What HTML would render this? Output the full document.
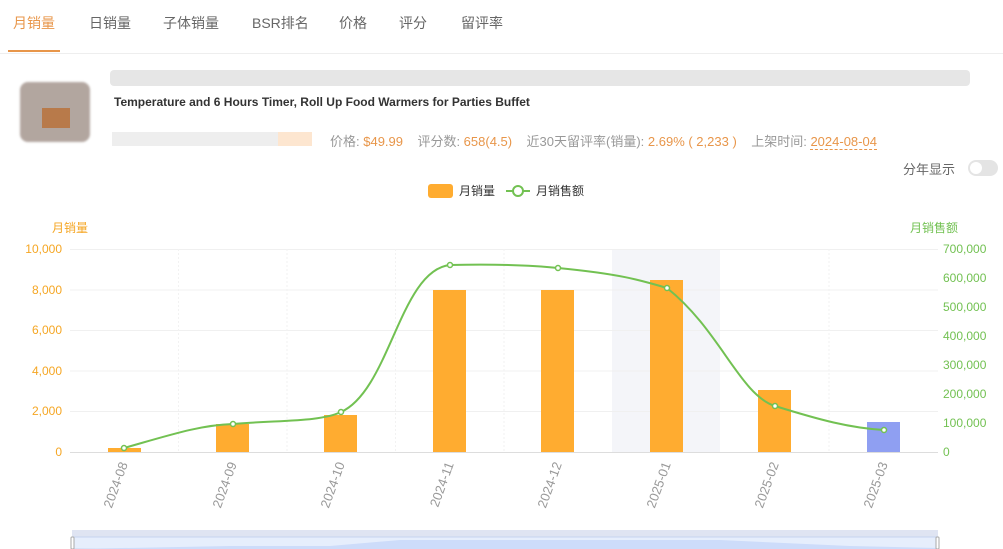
<!DOCTYPE html>
<html><head><meta charset="utf-8"><style>
body{margin:0;width:1003px;height:549px;background:#fff;font-family:"Liberation Sans","Noto Sans CJK SC",sans-serif;position:relative;overflow:hidden}
.tabs{position:absolute;top:0;left:0;right:0;height:53px;border-bottom:1px solid #eee}
.tab{position:absolute;top:13px;font-size:14px;color:#666}
.ul{position:absolute;left:8px;top:50px;width:52px;height:2px;background:#e8964a}
.a{position:absolute}
</style></head><body>
<div class="tabs">
<span class="tab" style="left:13px;color:#e8964a">月销量</span>
<span class="tab" style="left:89px">日销量</span>
<span class="tab" style="left:163px">子体销量</span>
<span class="tab" style="left:252px">BSR排名</span>
<span class="tab" style="left:339px">价格</span>
<span class="tab" style="left:399px">评分</span>
<span class="tab" style="left:461px">留评率</span>
<div class="ul"></div>
</div>
<div class="a" style="left:20px;top:82px;width:70px;height:60px;background:#a09088;filter:blur(1px);border-radius:8px;opacity:.8"></div>
<div class="a" style="left:42px;top:108px;width:28px;height:20px;background:#b87a4a"></div>
<div class="a" style="left:110px;top:70px;width:860px;height:16px;background:#e6e6e6;border-radius:4px"></div>
<div class="a" style="left:114px;top:95px;font-size:12px;font-weight:bold;color:#333">Temperature and 6 Hours Timer, Roll Up Food Warmers for Parties Buffet</div>
<div class="a" style="left:112px;top:132px;width:200px;height:14px;background:#eee"></div>
<div class="a" style="left:278px;top:132px;width:34px;height:14px;background:#fde6d0"></div>
<div class="a" style="left:330px;top:131px;font-size:13px;color:#999;white-space:nowrap">价格: <span style="color:#e8964a">$49.99</span>&nbsp;&nbsp;&nbsp;&nbsp;评分数: <span style="color:#e8964a">658(4.5)</span>&nbsp;&nbsp;&nbsp;&nbsp;近30天留评率(销量): <span style="color:#e8964a">2.69% ( 2,233 )</span>&nbsp;&nbsp;&nbsp;&nbsp;上架时间: <span style="color:#e8964a;border-bottom:1px dashed #e8964a">2024-08-04</span></div>
<div class="a" style="left:903px;top:159px;font-size:13px;color:#666">分年显示</div>
<div class="a" style="left:968px;top:160px;width:30px;height:16px;border-radius:8px;background:#e4e4e4"><div style="margin:2px;width:12px;height:12px;border-radius:6px;background:#fff"></div></div>
<svg class="a" style="left:0;top:0" width="1003" height="549" font-family="Liberation Sans,Noto Sans CJK SC,sans-serif">
<rect x="428" y="184" width="25" height="14" rx="3" fill="#ffac30"/>
<text x="459" y="195" font-size="12" fill="#333">月销量</text>
<line x1="506" y1="191" x2="530" y2="191" stroke="#72c152" stroke-width="2"/><circle cx="518" cy="191" r="5" fill="#fff" stroke="#72c152" stroke-width="2"/>
<text x="536" y="195" font-size="12" fill="#333">月销售额</text>
<text x="52" y="232" font-size="12" fill="#f5a623">月销量</text>
<text x="910" y="232" font-size="12" fill="#72c152">月销售额</text>
<rect x="612" y="249" width="108" height="203" fill="#f4f5f9"/>
<g stroke="#f0f0f0" stroke-width="1">
<line x1="70" y1="249.5" x2="938" y2="249.5"/><line x1="70" y1="290" x2="938" y2="290"/><line x1="70" y1="330.5" x2="938" y2="330.5"/><line x1="70" y1="371" x2="938" y2="371"/><line x1="70" y1="411.5" x2="938" y2="411.5"/>
</g>
<g stroke="#f2f2f2" stroke-dasharray="2,2"><line x1="178.5" y1="249" x2="178.5" y2="452"/><line x1="287" y1="249" x2="287" y2="452"/><line x1="395.5" y1="249" x2="395.5" y2="452"/><line x1="504" y1="249" x2="504" y2="452"/><line x1="829" y1="249" x2="829" y2="452"/></g>
<line x1="70" y1="452.5" x2="938" y2="452.5" stroke="#ddd"/>
<g font-size="12" fill="#f5a623" text-anchor="end"><text x="62" y="253">10,000</text><text x="62" y="294">8,000</text><text x="62" y="334">6,000</text><text x="62" y="375">4,000</text><text x="62" y="415">2,000</text><text x="62" y="456">0</text></g>
<g font-size="12" fill="#72c152"><text x="943" y="253">700,000</text><text x="943" y="282">600,000</text><text x="943" y="311">500,000</text><text x="943" y="340">400,000</text><text x="943" y="369">300,000</text><text x="943" y="398">200,000</text><text x="943" y="427">100,000</text><text x="943" y="456">0</text></g>
<g fill="#ffac30"><rect x="108" y="448" width="33" height="4"/><rect x="216" y="424" width="33" height="28"/><rect x="324" y="415" width="33" height="37"/><rect x="433" y="290" width="33" height="162"/><rect x="541" y="290" width="33" height="162"/><rect x="650" y="280" width="33" height="172"/><rect x="758" y="390" width="33" height="62"/></g>
<rect x="867" y="422" width="33" height="30" fill="#8f9ff2"/>
<path d="M124,448 C170,435 200,425 233,424 C280,420 320,422 341,412 C390,390 400,270 450,265 C500,264 530,265 558,268 C620,274 640,280 667,288 C720,330 740,395 775,406 C820,420 850,428 884,430" fill="none" stroke="#72c152" stroke-width="2"/>
<g fill="#fff" stroke="#72c152" stroke-width="1.5"><circle cx="124" cy="448" r="2.5"/><circle cx="233" cy="424" r="2.5"/><circle cx="341" cy="412" r="2.5"/><circle cx="450" cy="265" r="2.5"/><circle cx="558" cy="268" r="2.5"/><circle cx="667" cy="288" r="2.5"/><circle cx="775" cy="406" r="2.5"/><circle cx="884" cy="430" r="2.5"/></g>
<g font-size="13" fill="#999">
<text transform="translate(128,464) rotate(-70)" text-anchor="end">2024-08</text>
<text transform="translate(237,464) rotate(-70)" text-anchor="end">2024-09</text>
<text transform="translate(345,464) rotate(-70)" text-anchor="end">2024-10</text>
<text transform="translate(454,464) rotate(-70)" text-anchor="end">2024-11</text>
<text transform="translate(562,464) rotate(-70)" text-anchor="end">2024-12</text>
<text transform="translate(671,464) rotate(-70)" text-anchor="end">2025-01</text>
<text transform="translate(779,464) rotate(-70)" text-anchor="end">2025-02</text>
<text transform="translate(888,464) rotate(-70)" text-anchor="end">2025-03</text>
</g>
<rect x="72" y="530" width="866" height="7" fill="#dfe4f2"/>
<rect x="72" y="537" width="866" height="12" fill="#e6eefc" stroke="#c5d3ef"/>
<path d="M72,549 L230,546 L330,546 L400,540 L720,540 L850,546 L938,548 L938,549Z" fill="#cddcfa"/>
<rect x="71" y="537" width="3" height="12" rx="1" fill="#fff" stroke="#aaa"/><rect x="936" y="537" width="3" height="12" rx="1" fill="#fff" stroke="#aaa"/>
</svg>
</body></html>
